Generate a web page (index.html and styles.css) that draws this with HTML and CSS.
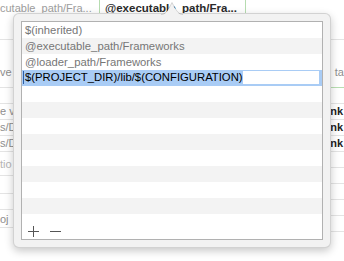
FILE: index.html
```html
<!DOCTYPE html>
<html lang="en">
<head>
  <meta charset="UTF-8">
  <meta name="viewport" content="width=device-width, initial-scale=1.0">
  <title>Runpath Search Paths</title>
  <link rel="stylesheet" href="styles.css">
</head>
<body>
<div class="window">
  <!-- build settings behind the popover -->
  <div class="top-row">
    <div class="top-left">cutable_path/Fra...</div>
    <div class="top-cell">@executable_path/Fra...</div>
  </div>
  <div class="columns">
    <div class="col col-left">
      <div class="row h24"></div>
      <div class="row h48">ve</div>
      <div class="row"></div>
      <div class="row">e v</div>
      <div class="row">s/D</div>
      <div class="row">s/D</div>
      <div class="row h24 faint">tio</div>
      <div class="row h18"></div>
      <div class="row"></div>
      <div class="row h18 oj">oj</div>
    </div>
    <div class="col col-right">
      <div class="row h24"></div>
      <div class="row h48 green right">ta</div>
      <div class="row"></div>
      <div class="row right bold">nk</div>
      <div class="row right bold">nk</div>
      <div class="row right bold">nk</div>
      <div class="row"></div>
      <div class="row"></div>
      <div class="row"></div>
      <div class="row"></div>
      <div class="row"></div>
    </div>
  </div>

  <!-- popover with the path list -->
  <div class="popover">
    <svg class="arrow" width="22" height="14" viewBox="0 0 22 14">
      <path d="M0 14 C4 14 6 11 8.5 6.5 L11 1.5 L13.5 6.5 C16 11 18 14 22 14 Z" fill="#f2f2f2"/>
      <path d="M0 13.5 C4 13.5 6 10.5 8.5 6 L11 1.5 L13.5 6 C16 10.5 18 13.5 22 13.5" fill="none" stroke="rgba(0,0,0,0.14)"/>
    </svg>
    <div class="list">
      <div class="item">$(inherited)</div>
      <div class="item alt">@executable_path/Frameworks</div>
      <div class="item">@loader_path/Frameworks</div>
      <div class="item selected">
        <div class="field">
          <span class="caret"></span>
          <span class="sel">$(PROJECT_DIR)/lib/$(CONFIGURATION)</span>
          <span class="fill"></span>
        </div>
      </div>
      <div class="item"></div>
      <div class="item alt"></div>
      <div class="item"></div>
      <div class="item alt"></div>
      <div class="item"></div>
      <div class="item alt"></div>
      <div class="item"></div>
      <div class="item alt"></div>
      <div class="list-footer">
        <svg width="12" height="12" viewBox="0 0 12 12">
          <path d="M5.5 0 V11 M0 5.5 H11" stroke="#555" stroke-width="1" fill="none"/>
        </svg>
        <svg width="12" height="12" viewBox="0 0 12 12">
          <path d="M1 5.5 H12" stroke="#555" stroke-width="1" fill="none"/>
        </svg>
      </div>
    </div>
  </div>
</div>
</body>
</html>
```

FILE: styles.css
```css
body {
  margin: 0;
  padding: 0;
  font-family: "Liberation Sans", Arial, sans-serif;
  background-color: #fff;
}

.window {
  position: relative;
  width: 344px;
  height: 261px;
  overflow: hidden;
  font-size: 11px;
}

/* top row of the settings table */
.top-row {
  display: flex;
  height: 16px;
  line-height: 16px;
}
.top-left {
  width: 99px;
  white-space: nowrap;
  color: #9d9d9d;
}
.top-cell {
  width: 147px;
  height: 15px;
  margin-top: -1px;
  box-sizing: border-box;
  border: 1px solid #b6dcb0;
  padding-left: 5px;
  font-size: 11.5px;
  font-weight: bold;
  color: #2b2b2b;
  line-height: 16px;
  white-space: nowrap;
  overflow: hidden;
}

.columns {
  display: flex;
  justify-content: space-between;
}
.col {
  width: 40px;
}

.row {
  box-sizing: border-box;
  height: 16px;
  line-height: 15px;
  border-bottom: 1px solid #e4e4e4;
  color: #8e8e8e;
  white-space: nowrap;
}
.row.h18 { height: 18px; }
.row.h24 { height: 24px; }
.row.h48 { height: 48px; padding-top: 25px; }
.row.faint { color: #b4b4b4; padding-top: 5px; }
.row.oj { padding-top: 2px; }
.row.green { border-bottom-color: #b8dfb2; padding-top: 25px; }
.row.right { text-align: right; }
.row.bold {
  font-weight: bold;
  color: #1e1e1e;
  padding-right: 1px;
}

/* popover */
.popover {
  position: absolute;
  left: 13px;
  top: 13px;
  width: 318px;
  height: 235px;
  box-sizing: border-box;
  padding: 7px;
  border: 1px solid rgba(0, 0, 0, 0.13);
  border-radius: 6px;
  background-color: #f2f2f2;
  box-shadow: 0 3px 8px rgba(0, 0, 0, 0.22);
}
.arrow {
  position: absolute;
  left: 147px;
  top: -13px;
}

.list {
  border: 1px solid #b1b1b1;
  background-color: #fff;
}
.item {
  box-sizing: border-box;
  height: 16px;
  line-height: 16px;
  padding-left: 3px;
  font-size: 11.3px;
  color: #767676;
  white-space: nowrap;
}
.item.alt {
  background-color: #f3f3f3;
}
.item.selected {
  padding: 1px 3px 2px 1px;
  background-color: #a9ccf5;
}
.field {
  display: flex;
  height: 13px;
}
.caret {
  width: 1px;
  background-color: #2c5ea6;
}
.sel {
  padding-left: 1px;
  line-height: 13px;
  color: #000;
}
.fill {
  flex: 1;
  background-color: #fff;
}

.list-footer {
  box-sizing: border-box;
  height: 25px;
  padding: 12px 0 0 6px;
  display: flex;
  align-items: flex-start;
  gap: 9px;
}
```
